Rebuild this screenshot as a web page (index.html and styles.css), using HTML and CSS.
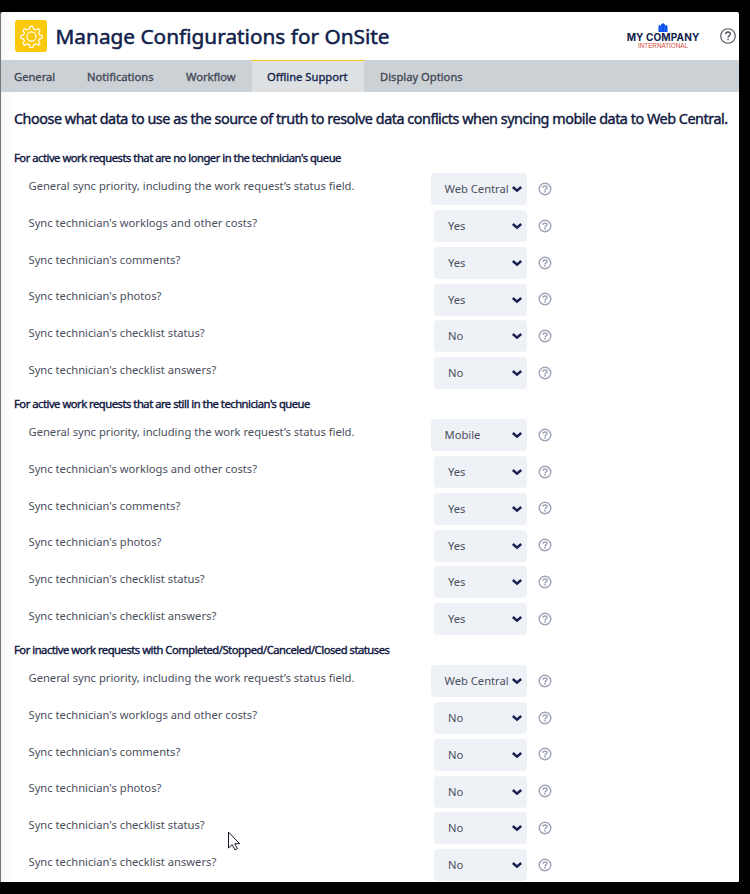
FILE: index.html
```
<!DOCTYPE html>
<html lang="en">
<head>
<meta charset="utf-8">
<title>Manage Configurations for OnSite</title>
<link rel="stylesheet" href="styles.css">
</head>
<body>
<svg class="defs" width="0" height="0" aria-hidden="true">
  <symbol id="help" viewBox="0 0 14 14">
    <circle cx="7" cy="7" r="5.800" fill="none" stroke="currentColor" stroke-width="1.400"/>
    <path d="M5 5.700C5 4.400 5.800 3.900 7 3.900s2 .600 2 1.600c0 1.400-2 1.300-2 2.900" fill="none" stroke="currentColor" stroke-width="1.500"/>
    <rect x="6.200" y="9.100" width="1.600" height="1.500" fill="currentColor"/>
  </symbol>
  <symbol id="chevron" viewBox="0 0 10 8">
    <path d="M.8 2l4.200 3.700L9.200 2" fill="none" stroke="currentColor" stroke-width="2.500"/>
  </symbol>
</svg>
<main class="window">
  <header class="header">
    <span class="gear">
      <svg width="23" height="23" viewBox="0 0 24 24" fill="none" stroke="#fff" stroke-width="1.200" stroke-linejoin="round">
        <circle cx="12" cy="12" r="4.800"/>
        <path d="M10.500 1.500h3l.7 2.800 2.300 1 2.500-1.500 1.900 1.900-1.500 2.500 1 2.300 2.600.6v2.800l-2.600.6-1 2.300 1.500 2.500-1.900 1.900-2.500-1.500-2.300 1-.7 2.800h-3l-.7-2.800-2.300-1-2.500 1.500-1.900-1.900 1.500-2.500-1-2.300-2.600-.6v-2.800l2.600-.6 1-2.300-1.500-2.500 1.900-1.900 2.500 1.500 2.300-1z"/>
      </svg>
    </span>
    <h1 class="title">Manage Configurations for OnSite</h1>
    <div class="brand">
      <svg class="brand-mark" width="10" height="9" viewBox="0 0 10 9" fill="#0b50f0"><path d="M.5 3l1-1.200L3 3V1.500L5 0l2 1.500V3l1.500-1.200 1 1.200V9h-9z"/><path d="M3.200 3v5.500M6.500 3v5.500" stroke="#4d86ff" stroke-width=".5"/></svg>
      <span class="brand-name">MY COMPANY</span>
      <span class="brand-sub">INTERNATIONAL</span>
    </div>
    <svg class="header-help" viewBox="0 0 16 16">
      <circle cx="8" cy="8" r="7.300" fill="none" stroke="#4b4e5c" stroke-width="1.100"/>
      <path d="M5.700 6.300C5.700 4.800 6.600 4 8 4s2.300.8 2.300 2.100C10.300 7.900 8 7.800 8 9.700" fill="none" stroke="#4b4e5c" stroke-width="1.300"/>
      <rect x="7.300" y="10.800" width="1.400" height="1.400" fill="#4b4e5c"/>
    </svg>
  </header>
  <nav class="tabs">
    <a class="tab t1">General</a><a class="tab t2">Notifications</a><a class="tab t3">Workflow</a><a class="tab t4 active">Offline Support</a><a class="tab t5">Display Options</a>
  </nav>
  <h2 class="intro"><span>Choose what data to use as the source of truth to resolve data conflicts when syncing mobile data to Web Central.</span></h2>
  <div id="sections"></div>
</main>
<svg class="cursor" width="14" height="21" viewBox="0 0 14 21"><path d="M.5 1v16l3.700-3.400 2.700 5.200 2.400-1.200-2.500-4.900h4.800z" fill="#fff" stroke="#15152a" stroke-width="1"/></svg>
<script src="app.js"></script>
</body>
</html>
```
FILE: styles.css
```
* { box-sizing: border-box; }
body { margin: 0; height: 894px; overflow: hidden; background: #000; padding: 12px 11px 0 0; font-family: "Noto Sans", "Open Sans", sans-serif; color: #4a4e5c; }
.defs { position: absolute; }
.window { height: 870px; overflow: hidden; background: linear-gradient(90deg, #f7f7f7, #fff 14px); border-left: 1px solid #77777b; border-radius: 2px 2px 1px 1px; }
.header { height: 48px; display: flex; align-items: center; padding: 0 3px 0 14px; }
.gear { width: 32px; height: 32px; border-radius: 3px; background: #fac90b; display: grid; place-items: center; }
.title { margin: 0 0 0 8.5px; font-size: 20.8px; font-weight: 400; -webkit-text-stroke: .5px; color: #10214a; white-space: nowrap; line-height: 30px; }
.brand { margin: 0 21px 0 auto; width: 72px; display: flex; flex-direction: column; align-items: center; white-space: nowrap; }
.brand-mark { display: block; }
.brand-name { font: 700 10px/10px Inter, sans-serif; letter-spacing: .12px; color: #10214a; }
.brand-sub { font: 6.3px/8px "Liberation Sans", sans-serif; color: #d4493d; }
.header-help { width: 16px; height: 16px; }
.tabs { height: 32px; display: flex; background: #ccd1d5; }
.tab { height: 32px; line-height: 34px; font-size: 11.2px; font-weight: 400; -webkit-text-stroke: .3px; color: #414654; white-space: nowrap; }
.t1 { width: 73px; padding-left: 13px; }
.t2 { width: 99px; padding-left: 13px; }
.t3 { width: 79px; padding-left: 13px; }
.t4 { width: 112px; padding-left: 15px; }
.t5 { padding-left: 16px; }
.active { background: #dee1e4; border-top: 1px solid #f5c518; color: #10214a; line-height: 32px; }
.intro { margin: 0; height: 53.6px; padding: 16px 0 0 13px; font-size: 14.4px; line-height: 22px; font-weight: 400; letter-spacing: -.475px; -webkit-text-stroke: .4px; color: #10183f; white-space: nowrap; }
.section-title { margin: 0; height: 25.2px; line-height: 24.2px; padding-left: 13px; font-size: 11.2px; font-weight: 400; letter-spacing: -.472px; -webkit-text-stroke: .4px; color: #10183f; white-space: nowrap; }
.row { height: 36.8px; display: flex; align-items: center; padding-left: 27.5px; }
.label { width: 405.5px; font-size: 11.2px; line-height: 16px; margin-top: -6.4px; white-space: nowrap; }
.select { width: 93px; height: 32px; border-radius: 4px; background: #eef1f6; display: flex; align-items: center; justify-content: space-between; padding: 0 5px 0 14px; font-size: 11.2px; line-height: 16px; white-space: nowrap; }
.select.wide { width: 96px; margin-left: -3px; padding-left: 13.5px; }
.select svg { width: 10px; height: 8px; color: #1a2050; flex: none; }
.help { width: 14px; height: 14px; margin: -.5px 0 0 10.5px; color: #a0a3b7; flex: none; }
.cursor { position: absolute; left: 228px; top: 831px; }
```
FILE: app.js
```
const labels = [
  "General sync priority, including the work request’s status field.",
  "Sync technician's worklogs and other costs?",
  "Sync technician's comments?",
  "Sync technician's photos?",
  "Sync technician's checklist status?",
  "Sync technician's checklist answers?"
];
const sections = [
  ["For active work requests that are no longer in the technician's queue", ["Web Central", "Yes", "Yes", "Yes", "No", "No"]],
  ["For active work requests that are still in the technician's queue", ["Mobile", "Yes", "Yes", "Yes", "Yes", "Yes"]],
  ["For inactive work requests with Completed/Stopped/Canceled/Closed statuses", ["Web Central", "No", "No", "No", "No", "No"]]
];
document.getElementById("sections").innerHTML = sections.map(([title, values]) =>
  `<section><h3 class="section-title"><span>${title}</span></h3>${values.map((v, i) =>
    `<div class="row"><span class="label"><span>${labels[i]}</span></span><span class="select${i ? "" : " wide"}"><span>${v}</span><svg><use href="#chevron"/></svg></span><svg class="help"><use href="#help"/></svg></div>`).join("")}</section>`).join("");
```
